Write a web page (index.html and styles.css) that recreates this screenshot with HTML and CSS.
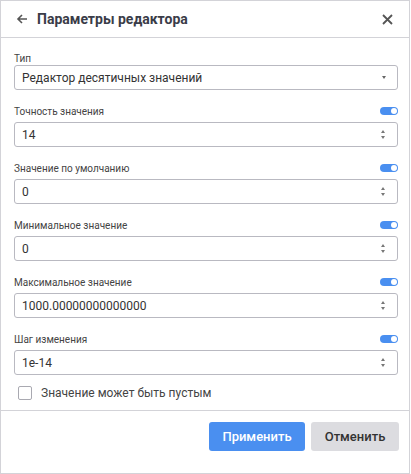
FILE: index.html
```html
<!DOCTYPE html>
<html lang="ru">
<head>
    <meta charset="UTF-8">
    <meta name="viewport" content="width=device-width, initial-scale=1.0">
    <title>Параметры редактора</title>
    <link rel="stylesheet" href="styles.css">
</head>
<body>
    <div class="dialog">
        <div class="dialog-header">
            <span class="back-btn">
                <svg width="12" height="12" viewBox="0 0 12 12"><path d="M11 6H2.5M6 2L2 6l4 4" fill="none" stroke="#555" stroke-width="1.6"/></svg>
            </span>
            <span class="dialog-title">Параметры редактора</span>
            <span class="close-btn">
                <svg width="11" height="11" viewBox="0 0 11 11"><path d="M1 1l9 9M10 1l-9 9" fill="none" stroke="#555" stroke-width="1.8"/></svg>
            </span>
        </div>

        <div class="dialog-body">
            <div class="field">
                <div class="field-label plain">Тип</div>
                <div class="input select">
                    <span>Редактор десятичных значений</span>
                    <span class="caret"></span>
                </div>
            </div>

            <div class="field">
                <div class="field-label"><span>Точность значения</span><span class="toggle on"></span></div>
                <div class="input"><span>14</span><span class="spin"></span></div>
            </div>

            <div class="field">
                <div class="field-label"><span>Значение по умолчанию</span><span class="toggle on"></span></div>
                <div class="input"><span>0</span><span class="spin"></span></div>
            </div>

            <div class="field">
                <div class="field-label"><span>Минимальное значение</span><span class="toggle on"></span></div>
                <div class="input"><span>0</span><span class="spin"></span></div>
            </div>

            <div class="field">
                <div class="field-label"><span>Максимальное значение</span><span class="toggle on"></span></div>
                <div class="input"><span>1000.00000000000000</span><span class="spin"></span></div>
            </div>

            <div class="field">
                <div class="field-label"><span>Шаг изменения</span><span class="toggle on"></span></div>
                <div class="input"><span>1e-14</span><span class="spin"></span></div>
            </div>

            <label class="check-row">
                <span class="checkbox"></span>
                <span>Значение может быть пустым</span>
            </label>
        </div>

        <div class="dialog-footer">
            <button class="btn btn-primary">Применить</button>
            <button class="btn btn-secondary">Отменить</button>
        </div>
    </div>
</body>
</html>
```

FILE: styles.css
```css
body {
    margin: 0;
    background-color: #fff;
    font-family: Roboto, "Liberation Sans", Arial, sans-serif;
    color: #333;
}
.dialog {
    width: 410px;
    height: 474px;
    box-sizing: border-box;
    border: 1px solid #d3d3d8;
    display: flex;
    flex-direction: column;
}
.dialog-header {
    height: 36px;
    border-bottom: 1px solid #d3d3d8;
    display: flex;
    align-items: center;
    padding: 0 14px;
}
.back-btn {
    display: flex;
    margin-left: 1px;
    margin-right: 9px;
}
.dialog-title {
    font-size: 14px;
    font-weight: bold;
    color: #3a3c48;
    flex: 1;
}
.close-btn {
    display: flex;
    margin-right: 2px;
}
.dialog-body {
    flex: 1;
    padding: 14px 11px 0 13px;
}
.field {
    margin-bottom: 11px;
}
.field-label {
    height: 20px;
    margin-bottom: 1px;
    font-size: 10px;
    color: #444;
    display: flex;
    align-items: center;
    justify-content: space-between;
}
.field-label.plain {
    height: 12px;
}
.toggle {
    width: 18px;
    height: 8px;
    border-radius: 4px;
    background-color: #4a8ff0;
    position: relative;
}
.toggle::after {
    content: "";
    position: absolute;
    right: 1px;
    top: 1px;
    width: 6px;
    height: 6px;
    border-radius: 50%;
    background-color: #fff;
}
.input {
    height: 25px;
    box-sizing: border-box;
    border: 1px solid #b9b9c1;
    border-radius: 3px;
    display: flex;
    align-items: center;
    justify-content: space-between;
    padding: 0 10px 0 7px;
    font-size: 12px;
    color: #333;
}
.caret {
    width: 0;
    height: 0;
    border-left: 2.5px solid transparent;
    border-right: 2.5px solid transparent;
    border-top: 3px solid #666;
    margin-right: 1px;
}
.spin {
    width: 5px;
    height: 9px;
    position: relative;
    margin-right: 1px;
}
.spin::before,
.spin::after {
    content: "";
    position: absolute;
    left: 0;
    border-left: 2.5px solid transparent;
    border-right: 2.5px solid transparent;
}
.spin::before {
    top: 0;
    border-bottom: 3px solid #777;
}
.spin::after {
    bottom: 0;
    border-top: 3px solid #777;
}
.check-row {
    display: flex;
    align-items: center;
    margin-top: 5px;
    margin-left: 4px;
    font-size: 12px;
    color: #444;
}
.checkbox {
    width: 12px;
    height: 12px;
    border: 1px solid #a9a9b1;
    border-radius: 2px;
    margin-right: 9px;
}
.dialog-footer {
    height: 51px;
    border-top: 1px solid #d3d3d8;
    display: flex;
    justify-content: flex-end;
    align-items: flex-start;
    gap: 6px;
    padding: 11px 10px 0 0;
}
.btn {
    height: 29px;
    border: none;
    border-radius: 3px;
    font-family: Roboto, "Liberation Sans", Arial, sans-serif;
    font-size: 13px;
    font-weight: 500;
    cursor: pointer;
}
.btn-primary {
    width: 96px;
    background-color: #4a8ff0;
    color: #fff;
}
.btn-secondary {
    width: 88px;
    background-color: #dcdce0;
    color: #333;
}
```
